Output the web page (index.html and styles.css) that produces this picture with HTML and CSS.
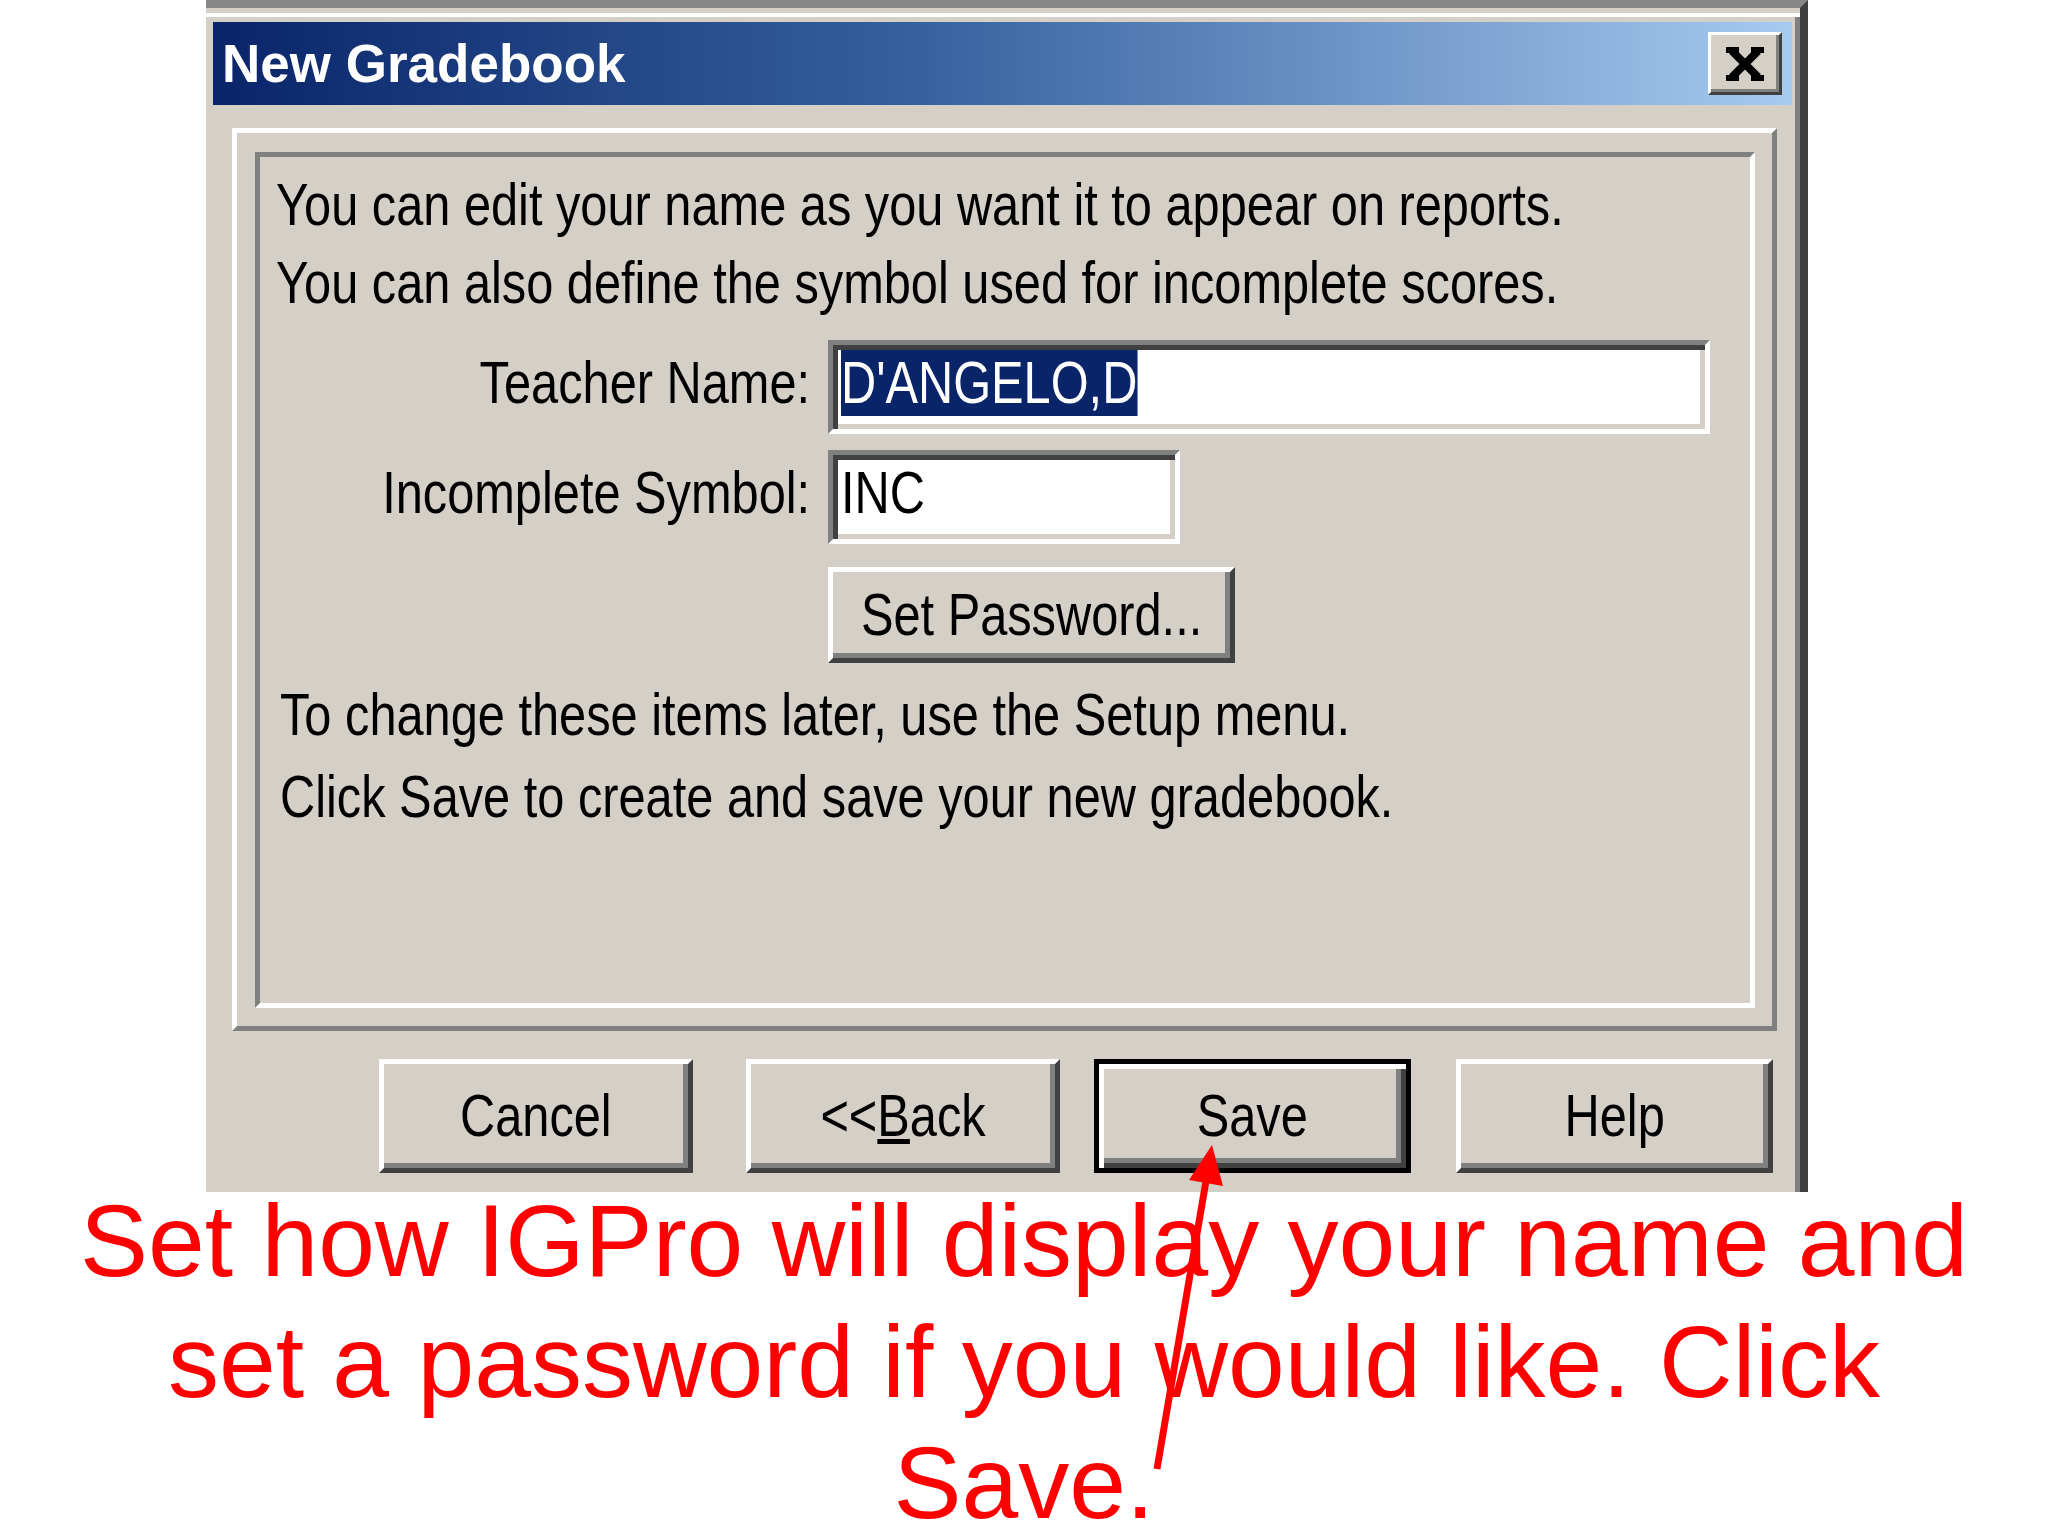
FILE: index.html
```html
<!DOCTYPE html>
<html lang="en">
<head>
    <meta charset="UTF-8">
    <title>New Gradebook</title>
    <link rel="stylesheet" href="styles.css">
</head>
<body>
    <div class="dialog">
        <div class="titlebar">
            <span class="title">New Gradebook</span>
            <button class="close-button" aria-label="Close">
                <svg width="38" height="34" viewBox="0 0 38 34">
                    <path d="M6 4 L32 30 M32 4 L6 30" stroke="#000" stroke-width="8" fill="none"/>
                    <rect x="0" y="0" width="13" height="6" fill="#000"/>
                    <rect x="25" y="0" width="13" height="6" fill="#000"/>
                    <rect x="0" y="28" width="13" height="6" fill="#000"/>
                    <rect x="25" y="28" width="13" height="6" fill="#000"/>
                </svg>
            </button>
        </div>

        <div class="panel-outer">
            <div class="panel-inner">
                <div class="intro">
                    <div><span class="narrow">You can edit your name as you want it to appear on reports.</span></div>
                    <div><span class="narrow">You can also define the symbol used for incomplete scores.</span></div>
                </div>

                <div class="field-row">
                    <label class="field-label"><span class="narrow">Teacher Name:</span></label>
                    <div class="text-box name-box"><span class="narrow"><span class="selected">D'ANGELO,D</span></span></div>
                </div>
                <div class="field-row second">
                    <label class="field-label"><span class="narrow">Incomplete Symbol:</span></label>
                    <div class="text-box symbol-box"><span class="narrow">INC</span></div>
                </div>

                <button class="win-button password-button"><span class="narrow">Set Password...</span></button>

                <div class="notes">
                    <div><span class="narrow">To change these items later, use the Setup menu.</span></div>
                    <div><span class="narrow">Click Save to create and save your new gradebook.</span></div>
                </div>
            </div>
        </div>

        <div class="button-row">
            <button class="win-button action cancel"><span class="narrow">Cancel</span></button>
            <button class="win-button action back"><span class="narrow">&lt;&lt;<u>B</u>ack</span></button>
            <button class="win-button action save default"><span class="narrow">Save</span></button>
            <button class="win-button action help"><span class="narrow">Help</span></button>
        </div>
    </div>

    <div class="caption">
        Set how IGPro will display your name and<br>
        set a password if you would like. Click<br>
        Save.
    </div>

    <svg class="arrow" width="2048" height="1536" viewBox="0 0 2048 1536">
        <line x1="1157" y1="1469" x2="1207" y2="1175" stroke="#ff0000" stroke-width="7"/>
        <polygon points="1212,1145 1223,1186 1189,1180" fill="#ff0000"/>
    </svg>
</body>
</html>
```

FILE: styles.css
```css
* {
    margin: 0;
    padding: 0;
    box-sizing: border-box;
}

body {
    position: relative;
    width: 2048px;
    height: 1536px;
    overflow: hidden;
    background: #fff;
    font-family: 'Liberation Sans', Arial, sans-serif;
    font-size: 59px;
    color: #000;
}

/* the old dialog font is much narrower than Arial */
.narrow {
    display: inline-block;
    white-space: nowrap;
    transform: scaleX(0.826);
    transform-origin: left center;
}

.dialog {
    margin-left: 206px;
    width: 1602px;
    height: 1192px;
    background: #d4d0c8;
    border-top: 8px solid #878787;
    border-right: 8px solid #404040;
    padding: 14px 8px 0 7px;
    box-shadow: inset 0 5px 0 #d4d0c8, inset 0 9px 0 #fff, inset -5px 0 0 #808080;
}

.titlebar {
    height: 83px;
    display: flex;
    align-items: center;
    justify-content: space-between;
    padding: 0 10px 0 9px;
    background: linear-gradient(to right, #0a246a 0%, #36629e 45%, #a6caf0 100%);
}

.title {
    font-weight: bold;
    font-size: 53px;
    line-height: 1;
    color: #fff;
}

.close-button {
    width: 74px;
    height: 63px;
    display: flex;
    align-items: center;
    justify-content: center;
    background: #d4d0c8;
    border: 3px solid;
    border-color: #fff #404040 #404040 #fff;
    box-shadow: inset -3px -3px 0 #808080;
}

.panel-outer {
    margin: 23px 0 0 19px;
    width: 1545px;
    height: 903px;
    padding: 19px 0 0 18px;
    border: 5px solid;
    border-color: #fff #808080 #808080 #fff;
}

.panel-inner {
    width: 1500px;
    height: 856px;
    padding: 9px 0 0 16px;
    border: 5px solid;
    border-color: #808080 #fff #fff #808080;
}

.intro {
    line-height: 78px;
}

.field-row {
    display: grid;
    grid-template-columns: 534px auto;
    column-gap: 18px;
    align-items: baseline;
    margin-top: 18px;
}

.field-row.second {
    margin-top: 16px;
}

.field-label {
    text-align: right;
    line-height: 59px;
}

.field-label .narrow {
    transform-origin: right center;
}

.text-box {
    height: 94px;
    padding: 9px 0 0 8px;
    background: #fff;
    border: 5px solid;
    border-color: #808080 #fff #fff #808080;
    box-shadow: inset 5px 5px 0 #404040, inset -5px -5px 0 #d4d0c8;
    line-height: 59px;
    white-space: nowrap;
}

.name-box {
    width: 882px;
}

.symbol-box {
    width: 352px;
}

.selected {
    background: #0a246a;
    color: #fff;
}

.win-button {
    font-family: inherit;
    font-size: 59px;
    color: #000;
    background: #d4d0c8;
    border: 5px solid;
    border-color: #fff #404040 #404040 #fff;
    box-shadow: inset -5px -5px 0 #808080;
    display: flex;
    align-items: center;
    justify-content: center;
    line-height: 1;
    white-space: nowrap;
}

.win-button .narrow {
    transform-origin: center center;
}

.password-button {
    margin: 23px 0 0 552px;
    width: 407px;
    height: 96px;
}

.notes {
    margin-top: 11px;
    padding-left: 4px;
    line-height: 82px;
}

.button-row {
    display: flex;
    margin-top: 28px;
    padding-left: 166px;
}

.action {
    width: 314px;
    height: 114px;
}

.back {
    margin-left: 53px;
}

.save {
    margin-left: 34px;
    width: 317px;
}

.help {
    margin-left: 45px;
    width: 317px;
}

.win-button.default {
    border: 5px solid #000;
    box-shadow: inset 5px 5px 0 #fff, inset -5px -5px 0 #404040, inset -10px -10px 0 #808080;
}

.caption {
    margin-top: -11px;
    text-align: center;
    font-size: 102px;
    line-height: 121px;
    color: #ff0000;
    white-space: nowrap;
}

.arrow {
    position: absolute;
    left: 0;
    top: 0;
    pointer-events: none;
}
```
